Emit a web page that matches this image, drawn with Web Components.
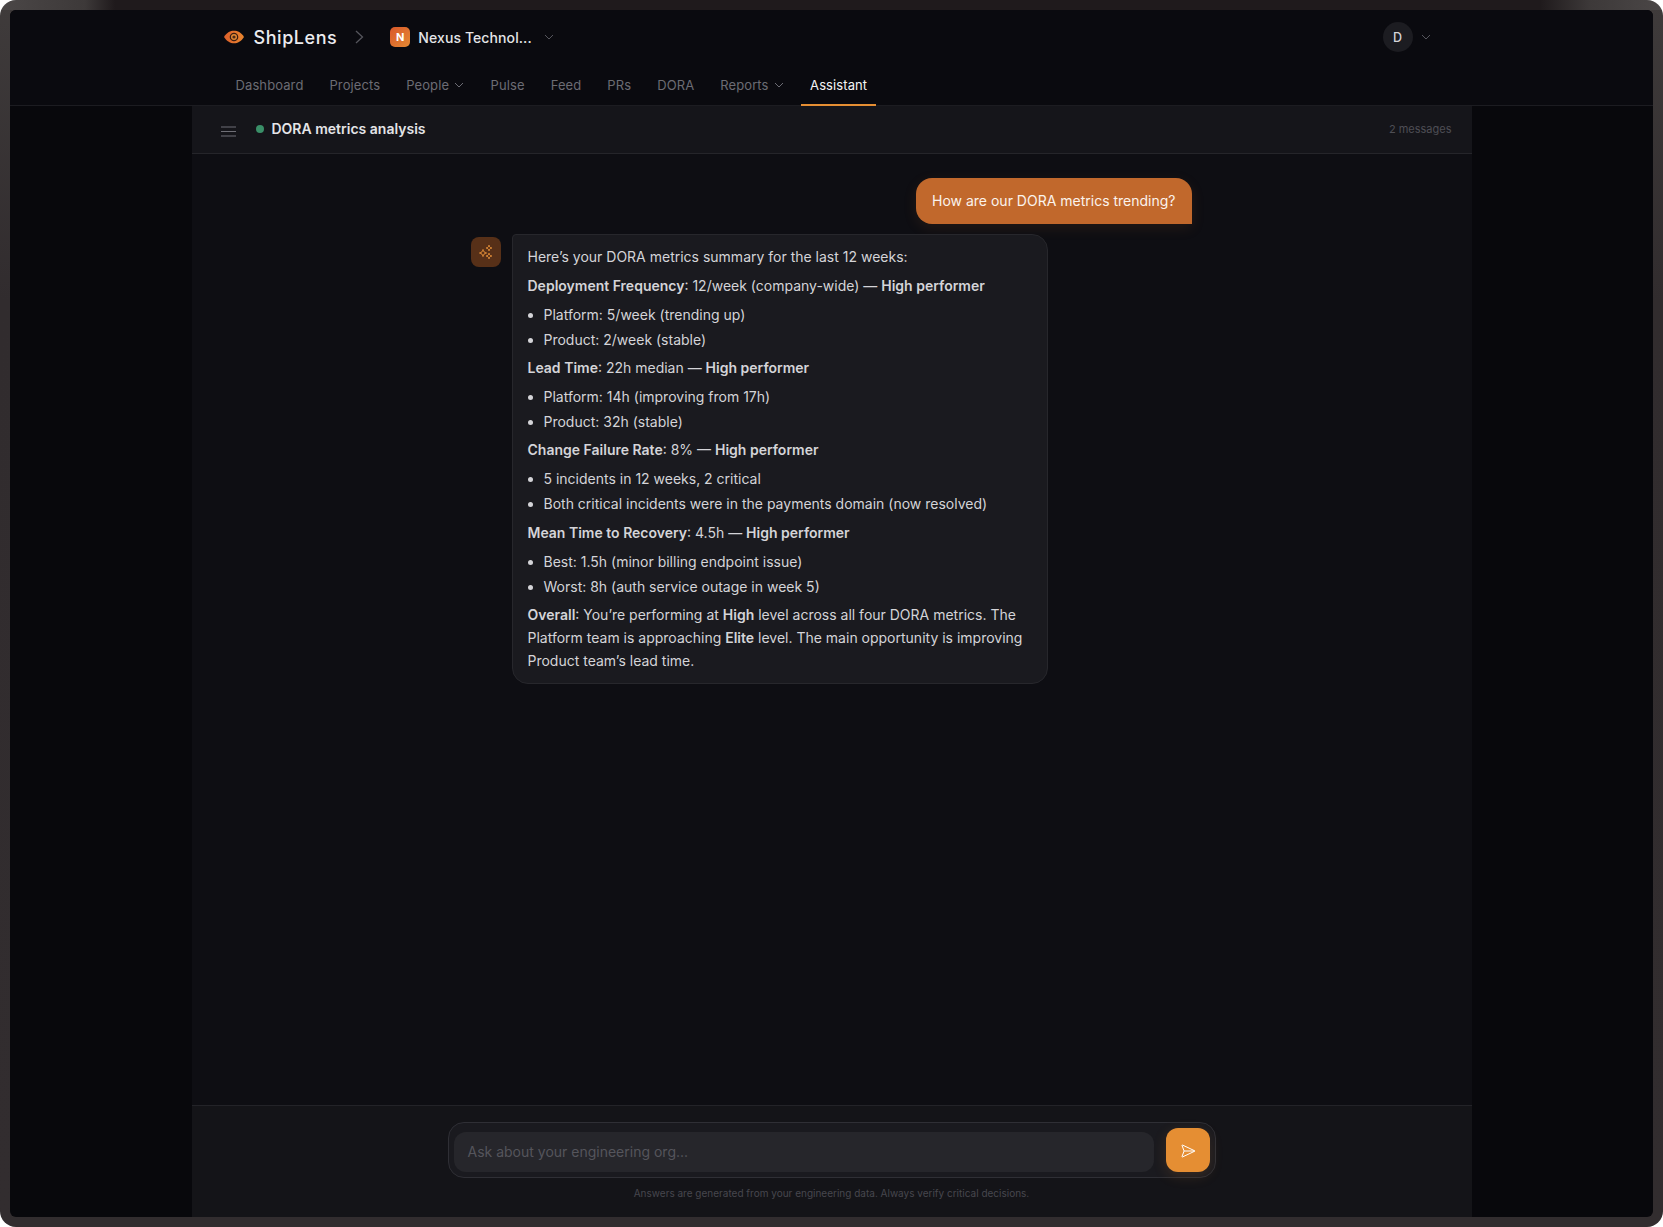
<!DOCTYPE html>
<html lang="en">
<head>
<meta charset="utf-8">
<title>ShipLens Assistant</title>
<style>
    html, body { margin: 0; height: 100%; background: #fff; }
    body { font-family: Inter, "Liberation Sans", sans-serif; }
    assistant-message strong { font-weight: 600; }
    assistant-message li + li { margin-top: 2px; }
</style>
</head>
<body>
<app-frame>
    <top-bar slot="header"></top-bar>
    <chat-panel>
        <chat-header slot="header" title-text="DORA metrics analysis" count="2 messages"></chat-header>
        <user-message>How are our DORA metrics trending?</user-message>
        <assistant-message>
            <p>Here’s your DORA metrics summary for the last 12 weeks:</p>
            <p><strong>Deployment Frequency</strong>: 12/week (company-wide) — <strong>High performer</strong></p>
            <ul><li>Platform: 5/week (trending up)</li><li>Product: 2/week (stable)</li></ul>
            <p><strong>Lead Time</strong>: 22h median — <strong>High performer</strong></p>
            <ul><li>Platform: 14h (improving from 17h)</li><li>Product: 32h (stable)</li></ul>
            <p><strong>Change Failure Rate</strong>: 8% — <strong>High performer</strong></p>
            <ul><li>5 incidents in 12 weeks, 2 critical</li><li>Both critical incidents were in the payments domain (now resolved)</li></ul>
            <p><strong>Mean Time to Recovery</strong>: 4.5h — <strong>High performer</strong></p>
            <ul><li>Best: 1.5h (minor billing endpoint issue)</li><li>Worst: 8h (auth service outage in week 5)</li></ul>
            <p><strong>Overall</strong>: You’re performing at <strong>High</strong> level across all four DORA metrics. The Platform team is approaching <strong>Elite</strong> level. The main opportunity is improving Product team’s lead time.</p>
        </assistant-message>
        <chat-composer slot="footer"></chat-composer>
    </chat-panel>
</app-frame>

<script>
const CHEVRON = `<svg class="chev" width="10" height="10" viewBox="0 0 10 10" fill="none" stroke="currentColor" stroke-width="1" aria-hidden="true"><path d="M1 3l4 4 4-4"/></svg>`;

class AppFrame extends HTMLElement {
    constructor() {
        super();
        this.attachShadow({ mode: 'open' });
    }

    connectedCallback() {
        this.shadowRoot.innerHTML = `
            <style>
                :host {
                    display: block;
                    height: 100%;
                    box-sizing: border-box;
                }
                .frame {
                    box-sizing: border-box;
                    height: 100%;
                    padding: 10px;
                    border-radius: 16px;
                    background:
                        linear-gradient(90deg, #4b4747 0, #3d3939 85px, #1f1a1c 115px, #1f1a1c 1540px, #3d3939 1590px, #4b4747 100%) top / 100% 10px no-repeat,
                        linear-gradient(180deg, #3f3b3b 0, #312c2e 300px, #322d2f 100%);
                }
                .screen {
                    display: flex;
                    flex-direction: column;
                    height: 100%;
                    border-radius: 6px;
                    overflow: hidden;
                    background: #08080c;
                }
            </style>
            <div class="frame">
                <div class="screen">
                    <slot name="header"></slot>
                    <slot></slot>
                </div>
            </div>
        `;
    }
}

class TopBar extends HTMLElement {
    constructor() {
        super();
        this.attachShadow({ mode: 'open' });
    }

    connectedCallback() {
        // Nav entries, the ones with a menu get a chevron
        const items = [
            ['Dashboard'], ['Projects'], ['People', true], ['Pulse'], ['Feed'],
            ['PRs'], ['DORA'], ['Reports', true], ['Assistant', false, true]
        ];
        const nav = items.map(([label, menu, active]) =>
            `<a class="${active ? 'active' : ''}">${label}${menu ? CHEVRON : ''}</a>`).join('');

        this.shadowRoot.innerHTML = `
            <style>
                :host {
                    display: block;
                    flex: none;
                    height: 96px;
                    box-sizing: border-box;
                    background: #0a0a0f;
                    border-bottom: 1px solid #1c1c21;
                }
                .inner {
                    width: 1280px;
                    margin: 0 auto;
                }
                .top {
                    display: flex;
                    align-items: center;
                    height: 54px;
                    padding: 0 41px 0 32px;
                }
                .brand {
                    margin-left: 10px;
                    font-size: 18px;
                    font-weight: 500;
                    letter-spacing: .55px;
                    color: #ececef;
                }
                .sep { margin: 0 26px 0 18px; color: #55555c; }
                .org-icon {
                    display: flex;
                    align-items: center;
                    justify-content: center;
                    width: 20px;
                    height: 20px;
                    border-radius: 5px;
                    background: linear-gradient(135deg, #d9572a, #e58a33);
                    color: #fff;
                    font-size: 11px;
                    font-weight: 700;
                }
                .org {
                    margin-left: 8px;
                    font-size: 14px;
                    font-weight: 500;
                    letter-spacing: .1px;
                    color: #e4e4e7;
                }
                .org-chev { margin-left: 12px; color: #55555c; display: flex; }
                .spacer { flex: 1; }
                .avatar {
                    display: flex;
                    align-items: center;
                    justify-content: center;
                    width: 30px;
                    height: 30px;
                    border-radius: 50%;
                    background: #1c1c21;
                    color: #d4d4d8;
                    font-size: 12.500px;
                    font-weight: 500;
                }
                .user-chev { margin-left: 8px; color: #55555c; display: flex; }
                nav {
                    display: flex;
                    gap: 8px;
                    height: 42px;
                    padding-left: 35px;
                }
                a {
                    display: flex;
                    align-items: center;
                    gap: 5px;
                    padding: 2px 9px 0;
                    box-sizing: border-box;
                    height: 42px;
                    border-bottom: 2px solid transparent;
                    font-size: 13px;
                    letter-spacing: .1px;
                    color: #6c6c74;
                    white-space: nowrap;
                }
                a .chev { margin-right: .5px; }
                a.active { color: #f4f4f5; border-bottom-color: #e58e33; }
            </style>
            <div class="inner">
                <div class="top">
                    <svg width="20" height="14" viewBox="0 0 20 14" aria-hidden="true">
                        <defs>
                            <linearGradient id="eye" x1="0" x2="1"><stop offset="0" stop-color="#dd5f2b"/><stop offset="1" stop-color="#e8862f"/></linearGradient>
                        </defs>
                        <path d="M0 7C3 2.3 6.3.8 10 .8S17 2.3 20 7c-3 4.7-6.3 6.2-10 6.2S3 11.700 0 7z" fill="url(#eye)"/>
                        <circle cx="10" cy="7" r="4.300" fill="#3a1e12"/>
                        <circle cx="10" cy="7" r="3" fill="#e58a33"/>
                        <circle cx="10" cy="7" r="1.600" fill="#4a2a18"/>
                    </svg>
                    <span class="brand">ShipLens</span>
                    <svg class="sep" width="9" height="14" viewBox="0 0 9 14" fill="none" stroke="currentColor" stroke-width="1.300" aria-hidden="true"><path d="M1 1l6.500 6L1 13"/></svg>
                    <span class="org-icon">N</span>
                    <span class="org">Nexus Technol...</span>
                    <span class="org-chev">${CHEVRON}</span>
                    <span class="spacer"></span>
                    <span class="avatar">D</span>
                    <span class="user-chev">${CHEVRON}</span>
                </div>
                <nav>${nav}</nav>
            </div>
        `;
    }
}

class ChatPanel extends HTMLElement {
    constructor() {
        super();
        this.attachShadow({ mode: 'open' });
    }

    connectedCallback() {
        this.shadowRoot.innerHTML = `
            <style>
                :host {
                    display: flex;
                    flex-direction: column;
                    flex: 1;
                    min-height: 0;
                    width: 1280px;
                    margin: 0 auto;
                    background: #0e0e13;
                }
                .messages {
                    flex: 1;
                    min-height: 0;
                    box-sizing: border-box;
                    width: 720px;
                    margin: 0 auto;
                    padding-top: 24px;
                    display: flex;
                    flex-direction: column;
                    gap: 10px;
                }
            </style>
            <slot name="header"></slot>
            <div class="messages"><slot></slot></div>
            <slot name="footer"></slot>
        `;
    }
}

class ChatHeader extends HTMLElement {
    constructor() {
        super();
        this.attachShadow({ mode: 'open' });
    }

    connectedCallback() {
        this.shadowRoot.innerHTML = `
            <style>
                :host {
                    display: flex;
                    align-items: center;
                    flex: none;
                    height: 48px;
                    box-sizing: border-box;
                    padding: 0 20px 2px 29px;
                    background: #15151a;
                    border-bottom: 1px solid #25252a;
                }
                svg { color: #6f6f77; margin-top: 6px; }
                .dot {
                    width: 8px;
                    height: 8px;
                    margin-left: 20px;
                    border-radius: 50%;
                    background: #3a8f68;
                }
                .title {
                    margin-left: 8px;
                    font-size: 14px;
                    font-weight: 600;
                    color: #e4e4e7;
                }
                .count {
                    margin-left: auto;
                    font-size: 11px;
                    color: #4e4e55;
                }
            </style>
            <svg width="15" height="11" viewBox="0 0 15 11" fill="none" stroke="currentColor" stroke-width="1.200" aria-hidden="true"><path d="M0 1h15M0 5.500h15M0 10h15"/></svg>
            <span class="dot"></span>
            <span class="title">${this.getAttribute('title-text')}</span>
            <span class="count">${this.getAttribute('count')}</span>
        `;
    }
}

class UserMessage extends HTMLElement {
    constructor() {
        super();
        this.attachShadow({ mode: 'open' });
    }

    connectedCallback() {
        this.shadowRoot.innerHTML = `
            <style>
                :host {
                    display: block;
                    align-self: flex-end;
                    padding: 12px 16px;
                    border-radius: 16px 16px 0 16px;
                    background: #c1682c;
                    box-shadow: 0 4px 14px rgba(193, 104, 44, .12);
                    color: #fbf3ec;
                    font-size: 14px;
                    line-height: 22px;
                }
            </style>
            <slot></slot>
        `;
    }
}

class AssistantMessage extends HTMLElement {
    constructor() {
        super();
        this.attachShadow({ mode: 'open' });
    }

    connectedCallback() {
        this.shadowRoot.innerHTML = `
            <style>
                :host {
                    display: flex;
                    gap: 11px;
                    align-items: flex-start;
                    margin-left: -1px;
                }
                .avatar {
                    display: flex;
                    align-items: center;
                    justify-content: center;
                    flex: none;
                    width: 30px;
                    height: 30px;
                    margin-top: 3px;
                    border-radius: 8px;
                    background: #573018;
                    color: #e8923a;
                }
                .bubble {
                    box-sizing: border-box;
                    width: 536px;
                    padding: 10px 14px 11px 15px;
                    border: 1px solid #27272c;
                    border-radius: 4px 16px 16px 16px;
                    background: #1a1a1f;
                    color: #d4d4d8;
                    font-size: 14px;
                    line-height: 23px;
                }
                ::slotted(p) { margin: 0 0 6px; }
                ::slotted(p:last-child) { margin-bottom: 0; }
                ::slotted(ul) { margin: 0 0 5.200px; padding-left: 16px; }
            </style>
            <div class="avatar">
                <svg width="14" height="14" viewBox="0 0 14 14" fill="none" stroke="currentColor" stroke-width="1" stroke-linejoin="round" aria-hidden="true">
                    <path d="M4 4.500c.3 2 1.400 3.100 3.500 3.500C5.400 8.400 4.300 9.500 4 11.500 3.700 9.500 2.600 8.400.5 8 2.600 7.600 3.700 6.500 4 4.500z"/>
                    <path d="M10 .2c.2 1.600 1.200 2.600 2.800 2.800-1.600.2-2.600 1.200-2.800 2.800C9.800 4.200 8.800 3.200 7.200 3 8.800 2.800 9.800 1.800 10 .2z"/>
                    <path d="M10 8.200c.2 1.600 1.200 2.600 2.800 2.800-1.600.2-2.600 1.200-2.800 2.800-.2-1.600-1.200-2.600-2.800-2.800 1.600-.2 2.600-1.200 2.800-2.800z"/>
                </svg>
            </div>
            <div class="bubble"><slot></slot></div>
        `;
    }
}

class ChatComposer extends HTMLElement {
    constructor() {
        super();
        this.attachShadow({ mode: 'open' });
    }

    connectedCallback() {
        this.shadowRoot.innerHTML = `
            <style>
                :host {
                    display: block;
                    flex: none;
                    height: 112px;
                    box-sizing: border-box;
                    padding-top: 16px;
                    background: #141418;
                    border-top: 1px solid #232328;
                }
                .box {
                    display: flex;
                    align-items: flex-end;
                    gap: 12px;
                    box-sizing: border-box;
                    width: 768px;
                    height: 56px;
                    margin: 0 auto;
                    padding: 5px;
                    border: 1px solid #2f2f35;
                    border-radius: 16px;
                    background: #1a1a1f;
                }
                .input {
                    display: flex;
                    align-items: center;
                    flex: 1;
                    height: 38px;
                    padding: 0 14px 2px;
                    border-radius: 12px;
                    background: #26262b;
                    color: #55555c;
                    font-size: 14px;
                }
                button {
                    display: flex;
                    align-items: center;
                    justify-content: center;
                    flex: none;
                    width: 44px;
                    height: 44px;
                    padding: 2px 0 0;
                    border: none;
                    border-radius: 12px;
                    background: #e58e33;
                    box-shadow: 0 4px 14px rgba(229, 142, 51, .15);
                    color: #fff;
                }
                .note {
                    margin-top: 9px;
                    text-align: center;
                    font-size: 10px;
                    color: #47474e;
                }
            </style>
            <div class="box">
                <div class="input">Ask about your engineering org...</div>
                <button aria-label="Send">
                    <svg width="16" height="16" viewBox="0 0 24 24" fill="none" stroke="currentColor" stroke-width="1.500" stroke-linecap="round" stroke-linejoin="round" aria-hidden="true">
                        <path d="M3.714 3.048a.498.498 0 0 0-.683.627l2.843 7.627a2 2 0 0 1 0 1.396l-2.842 7.627a.498.498 0 0 0 .682.627l18-8.500a.500.500 0 0 0 0-.904z"/>
                        <path d="M6 12h16"/>
                    </svg>
                </button>
            </div>
            <div class="note">Answers are generated from your engineering data. Always verify critical decisions.</div>
        `;
    }
}

customElements.define('app-frame', AppFrame);
customElements.define('top-bar', TopBar);
customElements.define('chat-panel', ChatPanel);
customElements.define('chat-header', ChatHeader);
customElements.define('user-message', UserMessage);
customElements.define('assistant-message', AssistantMessage);
customElements.define('chat-composer', ChatComposer);
</script>
</body>
</html>
